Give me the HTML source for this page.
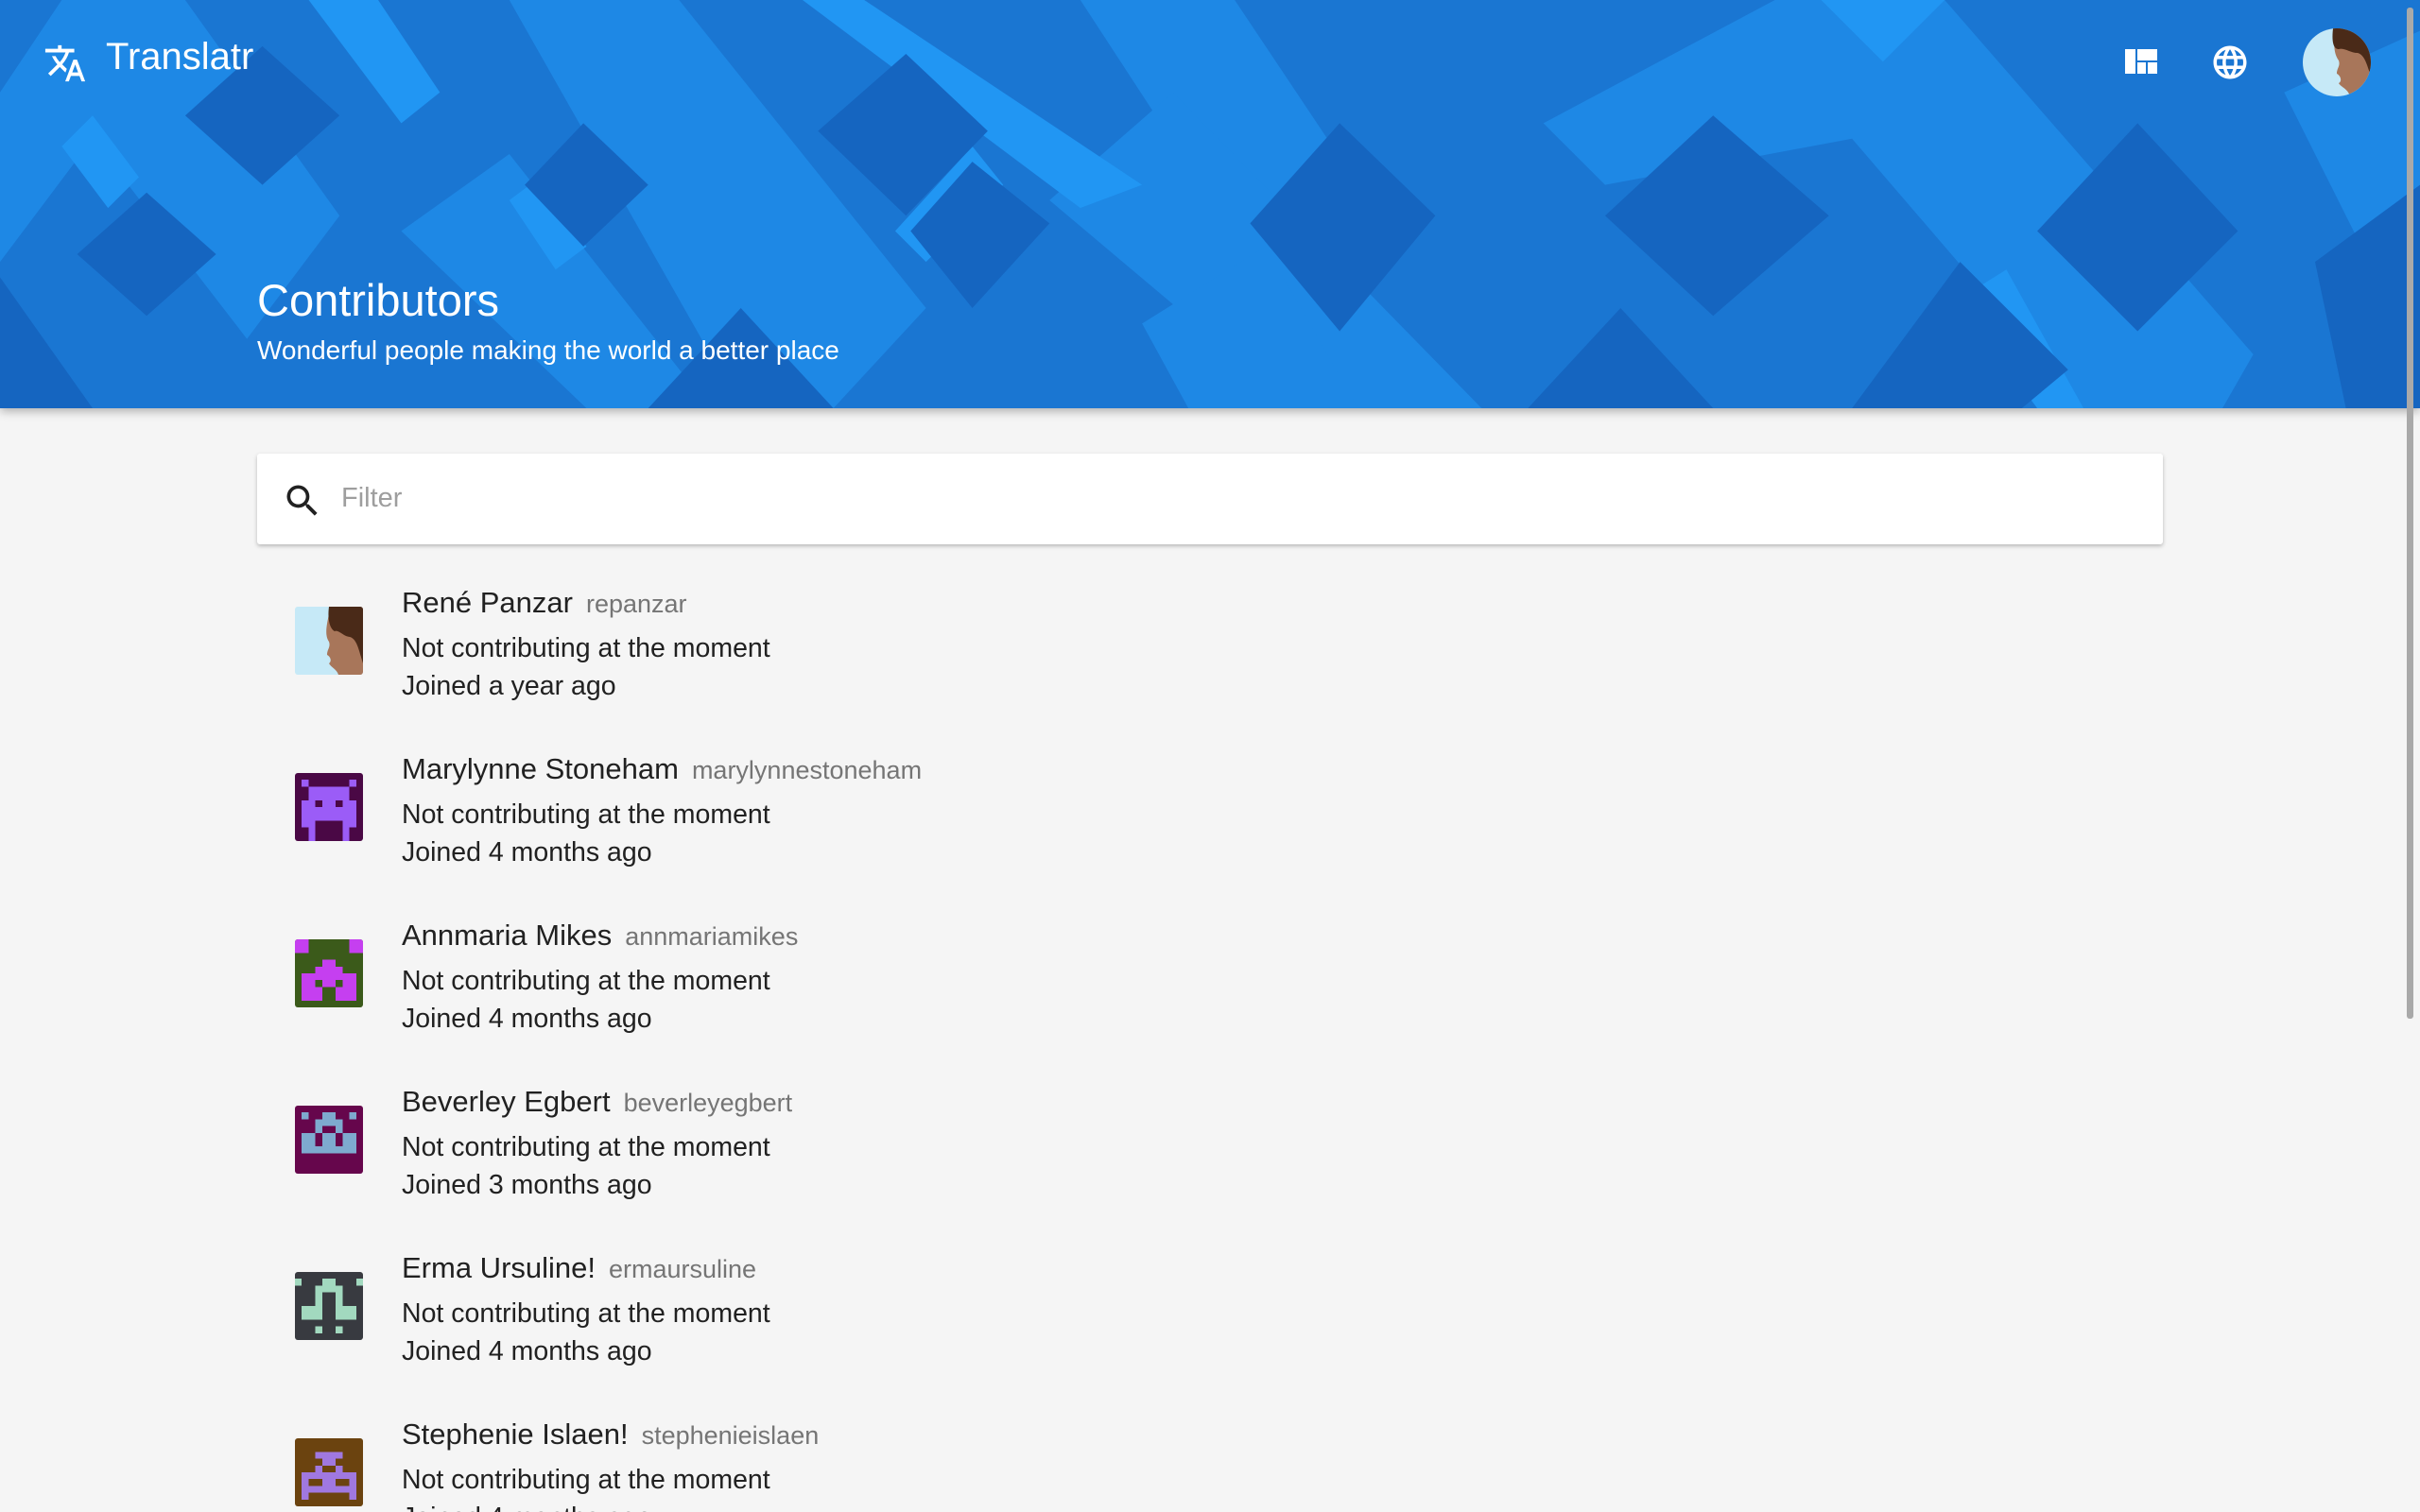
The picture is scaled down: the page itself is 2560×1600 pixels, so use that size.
<!DOCTYPE html>
<html><head><meta charset="utf-8"><style>
*{margin:0;padding:0;box-sizing:border-box}
html{width:2560px;height:1600px;overflow:hidden}
body{width:2560px;height:1600px;overflow:hidden;background:#f5f5f5;font-family:"Liberation Sans",Roboto,sans-serif;position:relative}
.hdr{position:absolute;left:0;top:0;width:2560px;height:432px;overflow:hidden;box-shadow:0 3px 10px rgba(0,0,0,.3);background:#1a76d2}
.hdr svg.bg{position:absolute;left:0;top:0}
.t{position:absolute;color:#fff;white-space:nowrap}
.card{position:absolute;left:272px;top:480px;width:2016px;height:96px;background:#fff;border-radius:3px;box-shadow:0 2px 4px rgba(0,0,0,.25)}
.item{position:absolute;left:312px;width:2000px;height:176px}
.av{position:absolute;left:0;top:0;width:72px;height:72px;border-radius:3px;overflow:hidden}
.nm{position:absolute;left:113px;top:-22px;font-size:31px;color:#212121;white-space:nowrap}
.nm span{font-size:27px;color:#757575;margin-left:14px}
.l2{position:absolute;left:113px;top:28px;font-size:28.5px;color:#212121;white-space:nowrap}
.l3{position:absolute;left:113px;top:68px;font-size:28.5px;color:#212121;white-space:nowrap}
.sb{position:absolute;left:2546px;top:8px;width:7px;height:1070px;background:#a9a9a9;border-radius:3px}
</style></head><body>
<div class="hdr">
<svg class="bg" width="2560" height="432" viewBox="0 0 1568 265" preserveAspectRatio="none">
<g fill="#1e88e5">
<polygon points="0,60 40,0 120,0 220,140 160,220 60,90 0,170"/>
<polygon points="330,0 440,0 600,200 540,265 480,265"/>
<polygon points="700,0 800,0 900,150 840,215"/>
<polygon points="1000,80 1150,0 1260,0 1460,230 1440,265 1350,265 1200,90 1040,120"/>
<polygon points="680,130 760,60 960,265 840,265"/>
<polygon points="260,150 330,100 460,265 380,265"/>
<polygon points="1480,60 1568,20 1568,160 1530,160"/>
<polygon points="740,210 820,160 880,265 770,265"/>
</g>
<g fill="#2196f3">
<polygon points="200,0 245,0 285,60 260,80"/>
<polygon points="520,0 560,0 740,120 700,135"/>
<polygon points="40,95 60,75 90,115 70,135"/>
<polygon points="330,130 350,115 380,160 360,175"/>
<polygon points="580,150 630,95 650,120 600,170"/>
<polygon points="1180,0 1260,0 1220,40"/>
<polygon points="1268,195 1300,175 1350,265 1320,265"/>
</g>
<g fill="#1565c0">
<polygon points="95,125 140,165 95,205 50,165"/>
<polygon points="378,80 420,120 378,160 340,120"/>
<polygon points="587,35 640,85 587,140 530,85"/>
<polygon points="630,105 680,145 630,200 590,150"/>
<polygon points="868,80 930,140 868,215 810,145"/>
<polygon points="1110,75 1185,140 1110,205 1040,140"/>
<polygon points="1385,80 1450,150 1385,215 1320,150"/>
<polygon points="1270,170 1340,240 1310,265 1200,265"/>
<polygon points="1050,200 1110,265 990,265"/>
<polygon points="480,200 540,265 420,265"/>
<polygon points="0,180 60,265 0,265"/>
<polygon points="170,30 220,75 170,120 120,75"/>
<polygon points="1500,170 1568,120 1568,265 1520,265"/>
</g>
</svg>
<svg style="position:absolute;left:44px;top:44px" width="50" height="46" viewBox="0 0 24 24"><path fill="#fff" d="M12.87 15.07l-2.54-2.51.03-.03A17.52 17.52 0 0014.07 6H17V4h-7V2H8v2H1v1.99h11.17C11.5 7.92 10.44 9.75 9 11.35 8.07 10.32 7.3 9.19 6.69 8h-2c.73 1.63 1.73 3.17 2.98 4.56l-5.09 5.02L4 19l5-5 3.11 3.11.76-2.04zM18.5 10h-2L12 22h2l1.12-3h4.75L21 22h2l-4.5-12zm-2.62 7l1.62-4.33L19.12 17h-3.24z"/></svg>
<div class="t" style="left:112px;top:38px;font-size:40px">Translatr</div>
<div class="t" style="left:272px;top:290px;font-size:47px">Contributors</div>
<div class="t" style="left:272px;top:355px;font-size:28px">Wonderful people making the world a better place</div>
<svg style="position:absolute;left:2248px;top:52px" width="34" height="26" viewBox="0 0 34 26"><path fill="#fff" d="M0 0h11v26H0zM13 0h21v12H13zM13 14h9v12h-9zM24 14h10v12H24z"/></svg>
<svg style="position:absolute;left:2338px;top:45px" width="42" height="42" viewBox="0 0 24 24"><path fill="#fff" d="M11.99 2C6.47 2 2 6.48 2 12s4.47 10 9.99 10C17.52 22 22 17.52 22 12S17.52 2 11.99 2zm6.930 6h-2.95a15.65 15.65 0 00-1.38-3.56A8.03 8.03 0 0118.92 8zM12 4.04c.83 1.2 1.48 2.53 1.91 3.96h-3.82c.43-1.43 1.08-2.76 1.91-3.960zM4.26 14C4.1 13.36 4 12.69 4 12s.1-1.36.26-2h3.38c-.08.66-.14 1.32-.14 2s.06 1.34.14 2H4.26zm.82 2h2.95c.32 1.25.78 2.45 1.38 3.56A7.99 7.99 0 015.08 16zm2.95-8H5.08a7.99 7.99 0 014.33-3.56A15.65 15.65 0 008.03 8zM12 19.96c-.83-1.2-1.48-2.53-1.91-3.96h3.82c-.43 1.43-1.08 2.76-1.91 3.96zM14.34 14H9.66c-.09-.66-.16-1.32-.16-2s.07-1.35.16-2h4.68c.09.65.16 1.32.16 2s-.07 1.34-.16 2zm.25 5.56c.6-1.11 1.06-2.31 1.38-3.56h2.95a8.03 8.03 0 01-4.33 3.56zM16.36 14c.08-.66.14-1.32.14-2s-.06-1.34-.14-2h3.38c.16.64.26 1.31.26 2s-.1 1.36-.26 2h-3.38z"/></svg>
<svg style="position:absolute;left:2436px;top:30px" width="72" height="72" viewBox="0 0 72 72"><defs><clipPath id="c"><circle cx="36" cy="36" r="36"/></clipPath></defs><g clip-path="url(#c)"><rect width="72" height="72" fill="#c6e9f7"/><path d="M34 0h38v72H50c-2-8-10-10-12-14 4-2 2-8-2-10 0-6 4-8 2-14-4-6-6-12-4-34z" fill="#a8765a"/><path d="M32 0h40v50c-4-10-6-22-14-24-8 0-14-6-20-4-4 0-8-4-6-22z" fill="#4a2a18"/></g></svg>
</div>
<div class="card">
<svg style="position:absolute;left:26px;top:28px" width="44" height="44" viewBox="0 0 24 24"><path fill="#212121" d="M15.5 14h-.79l-.28-.27A6.47 6.47 0 0016 9.5 6.5 6.5 0 109.5 16c1.61 0 3.09-.59 4.23-1.57l.27.28v.79l5 4.99L20.49 19l-4.99-5zm-6 0C7.010 14 5 11.99 5 9.5S7.01 5 9.5 5 14 7.01 14 9.5 11.99 14 9.5 14z"/></svg>
<div style="position:absolute;left:89px;top:31px;font-size:29px;color:#9e9e9e">Filter</div>
</div>

<div class="item" style="top:642px">
<div class="av"><svg width="72" height="72" viewBox="0 0 72 72"><rect width="72" height="72" fill="#c6e9f7"/><path d="M38 0h34v72H46c-2-6-8-8-10-12 3-2 2-7-2-9 0-6 4-8 2-14-4-6-4-14 2-37z" fill="#a8765a"/><path d="M36 0h36v60c-4-12-6-26-14-28-6 0-12-8-16-6-4-2-8-10-6-26z" fill="#4a2a18"/></svg></div>
<div class="nm">René Panzar<span>repanzar</span></div>
<div class="l2">Not contributing at the moment</div>
<div class="l3">Joined a year ago</div>
</div>

<div class="item" style="top:818px">
<div class="av"><svg width="72" height="72" viewBox="0 0 10 10" shape-rendering="crispEdges"><rect width="10" height="10" fill="#4a0845"/><g fill="#9b5cf7"><rect x="1" y="1" width="1" height="1"/><rect x="8" y="1" width="1" height="1"/><rect x="2" y="2" width="6" height="1"/><rect x="2" y="3" width="6" height="1"/><rect x="1" y="4" width="8" height="2"/><rect x="1" y="6" width="8" height="1"/><rect x="1" y="7" width="2" height="1"/><rect x="7" y="7" width="2" height="1"/><rect x="2" y="7" width="1" height="3"/><rect x="7" y="7" width="1" height="3"/></g><rect x="3" y="4" width="1" height="1" fill="#4a0845"/><rect x="6" y="4" width="1" height="1" fill="#4a0845"/></svg></div>
<div class="nm">Marylynne Stoneham<span>marylynnestoneham</span></div>
<div class="l2">Not contributing at the moment</div>
<div class="l3">Joined 4 months ago</div>
</div>

<div class="item" style="top:994px">
<div class="av"><svg width="72" height="72" viewBox="0 0 10 10" shape-rendering="crispEdges"><rect width="10" height="10" fill="#3b5a1a"/><g fill="#c53ff0"><rect x="0" y="0" width="2" height="2"/><rect x="8" y="0" width="2" height="2"/><rect x="4" y="3" width="2" height="1"/><rect x="3" y="4" width="4" height="1"/><rect x="1" y="5" width="8" height="4"/></g><rect x="3" y="6" width="1" height="1" fill="#3b5a1a"/><rect x="6" y="6" width="1" height="1" fill="#3b5a1a"/><rect x="4" y="7" width="2" height="2" fill="#3b5a1a"/></svg></div>
<div class="nm">Annmaria Mikes<span>annmariamikes</span></div>
<div class="l2">Not contributing at the moment</div>
<div class="l3">Joined 4 months ago</div>
</div>

<div class="item" style="top:1170px">
<div class="av"><svg width="72" height="72" viewBox="0 0 10 10" shape-rendering="crispEdges"><rect width="10" height="10" fill="#66064c"/><g fill="#7eaacf"><rect x="1" y="1" width="1" height="1"/><rect x="8" y="1" width="1" height="1"/><rect x="4" y="1" width="2" height="1"/><rect x="3" y="2" width="4" height="2"/><rect x="1" y="4" width="8" height="3"/></g><rect x="4" y="3" width="2" height="1" fill="#66064c"/><rect x="3" y="4" width="1" height="2" fill="#66064c"/><rect x="6" y="4" width="1" height="2" fill="#66064c"/></svg></div>
<div class="nm">Beverley Egbert<span>beverleyegbert</span></div>
<div class="l2">Not contributing at the moment</div>
<div class="l3">Joined 3 months ago</div>
</div>

<div class="item" style="top:1346px">
<div class="av"><svg width="72" height="72" viewBox="0 0 10 10" shape-rendering="crispEdges"><rect width="10" height="10" fill="#383a40"/><g fill="#a2d9bf"><rect x="0" y="1" width="1" height="1"/><rect x="9" y="1" width="1" height="1"/><rect x="4" y="1" width="2" height="1"/><rect x="3" y="2" width="4" height="3"/><rect x="1" y="5" width="8" height="2"/><rect x="3" y="8" width="1" height="1"/><rect x="6" y="8" width="1" height="1"/></g><rect x="4" y="3" width="2" height="5" fill="#383a40"/><rect x="3" y="7" width="4" height="1" fill="#383a40"/></svg></div>
<div class="nm">Erma Ursuline!<span>ermaursuline</span></div>
<div class="l2">Not contributing at the moment</div>
<div class="l3">Joined 4 months ago</div>
</div>

<div class="item" style="top:1522px">
<div class="av"><svg width="72" height="72" viewBox="0 0 10 10" shape-rendering="crispEdges"><rect width="10" height="10" fill="#6b430f"/><g fill="#a078e0"><rect x="3" y="2" width="4" height="1"/><rect x="4" y="3" width="2" height="1"/><rect x="3" y="4" width="1" height="1"/><rect x="6" y="4" width="1" height="1"/><rect x="1" y="5" width="8" height="3"/><rect x="1" y="8" width="1" height="1"/><rect x="8" y="8" width="1" height="1"/></g><rect x="2" y="6" width="2" height="1" fill="#6b430f"/><rect x="6" y="6" width="2" height="1" fill="#6b430f"/></svg></div>
<div class="nm">Stephenie Islaen!<span>stephenieislaen</span></div>
<div class="l2">Not contributing at the moment</div>
<div class="l3">Joined 4 months ago</div>
</div>
<div class="sb"></div>
</body></html>
